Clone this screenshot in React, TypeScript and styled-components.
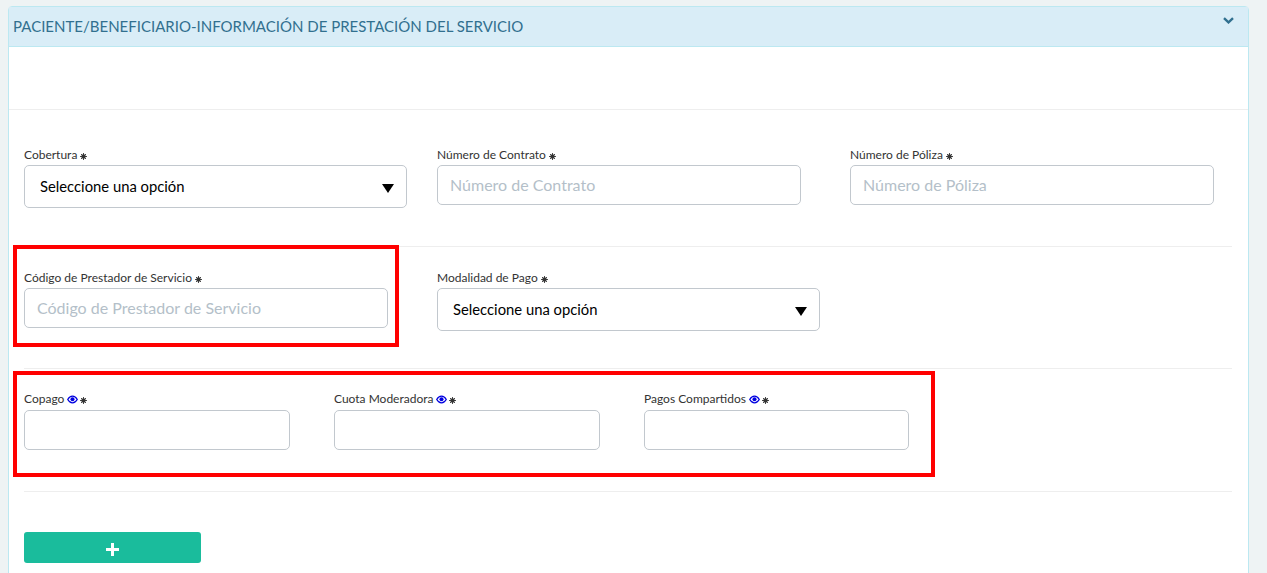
import React from 'react';
import styled, { createGlobalStyle } from 'styled-components';

const GlobalStyle = createGlobalStyle`
    html, body {
        margin: 0;
        height: 573px;
        overflow: hidden;
        background: #eef3f4;
        font-family: Lato, "Open Sans", sans-serif;
    }
    * { box-sizing: border-box; }
`;

const Page = styled.div`
    position: relative;
    height: 573px;
    overflow: hidden;
    padding: 6px 18px 0 8px;
`;

const Panel = styled.section`
    height: 600px;
    background: #fff;
    border: 1px solid #bce8f1;
    border-radius: 4px;
`;

const PanelHeader = styled.header`
    display: flex;
    justify-content: space-between;
    height: 40px;
    padding: 10px 14px 0 4px;
    background: #d9edf7;
    border-bottom: 1px solid #bce8f1;
    color: #31708f;
    font-size: 15px;
    line-height: 19px;
`;

const ChevronSvg = styled.svg`
    width: 11px;
    height: 7px;
`;

const Spacer = styled.div`
    height: 63px;
    border-bottom: 1px solid #eeeeee;
`;

const PanelBody = styled.div`
    padding: 0 16px 0 15px;
`;

const Row = styled.div<{ $height: number; $paddingTop: number; $pitch: number }>`
    display: grid;
    grid-template-columns: repeat(3, ${props => props.$pitch}px);
    align-content: start;
    height: ${props => props.$height}px;
    padding-top: ${props => props.$paddingTop}px;
    border-bottom: 1px solid #eeeeee;
`;

const Field = styled.div<{ $width: number }>`
    width: ${props => props.$width}px;
`;

const Label = styled.label<{ $gap?: number }>`
    display: flex;
    align-items: center;
    height: 15px;
    margin-bottom: ${props => props.$gap ?? 3}px;
    color: #333333;
    font-size: 12px;
    line-height: 15px;
    white-space: nowrap;
`;

const RequiredSvg = styled.svg`
    width: 7px;
    height: 7px;
    margin: 3px 0 0 3px;
    color: #333333;
`;

const EyeSvg = styled.svg`
    width: 11px;
    height: 9px;
    margin: 1px -1px 0 3px;
    color: #0000e0;
`;

const TextInput = styled.input`
    display: block;
    width: 100%;
    height: 40px;
    padding: 0 12px 2px;
    background: #fff;
    border: 1px solid #c2c8ce;
    border-radius: 5px;
    font-family: inherit;
    font-size: 16px;
    outline: none;

    &::placeholder {
        color: #b4bfc9;
        opacity: 1;
    }
`;

const Select = styled.div`
    display: flex;
    align-items: center;
    justify-content: space-between;
    height: 43px;
    padding: 0 12px 2px 15px;
    background: #fff;
    border: 1px solid #c2c8ce;
    border-radius: 5px;
    color: #000;
    font-size: 14.8px;
`;

const Caret = styled.span`
    width: 0;
    height: 0;
    margin-top: 5px;
    border-left: 6px solid transparent;
    border-right: 6px solid transparent;
    border-top: 9px solid #000;
`;

const AddButton = styled.button`
    display: flex;
    align-items: center;
    justify-content: center;
    width: 177px;
    height: 31px;
    margin-top: 40px;
    padding: 3px 1px 0 0;
    background: #1abc9c;
    border: none;
    border-radius: 3px;
`;

const PlusSvg = styled.svg`
    width: 13px;
    height: 13px;
`;

const Annotation = styled.div<{ $left: number; $top: number; $width: number; $height: number }>`
    position: absolute;
    left: ${props => props.$left}px;
    top: ${props => props.$top}px;
    width: ${props => props.$width}px;
    height: ${props => props.$height}px;
    border: 4px solid #ff0000;
    pointer-events: none;
`;

const Chevron = () => (
    <ChevronSvg viewBox="0 0 11 7">
        <path d="M1 1.2 5.500 5.400 10 1.200" fill="none" stroke="currentColor" strokeWidth="2.4" />
    </ChevronSvg>
);

const Required = () => (
    <RequiredSvg viewBox="0 0 7 7">
        <circle cx="3.5" cy="3.5" r="2.2" fill="currentColor" />
        <path
            d="M3.5 0v7M0 3.5h7M1 1l5 5M6 1 1 6"
            stroke="currentColor"
            strokeWidth="0.9"
        />
    </RequiredSvg>
);

const Eye = () => (
    <EyeSvg viewBox="0 0 12 9">
        <path
            d="M.8 4.500C2.200 2 4 .9 6 .9s3.800 1.100 5.200 3.600C9.800 7 8 8.100 6 8.100S2.200 7 .8 4.500Z"
            fill="none"
            stroke="currentColor"
            strokeWidth="1.4"
        />
        <circle cx="6" cy="4.3" r="2.2" fill="currentColor" />
    </EyeSvg>
);

const Plus = () => (
    <PlusSvg viewBox="0 0 13 13">
        <path d="M5 0h3v5h5v3H8v5H5V8H0V5h5Z" fill="#fff" />
    </PlusSvg>
);

const SelectField: React.FC<{ label: string }> = ({ label }) => (
    <Field $width={383}>
        <Label>{label}<Required /></Label>
        <Select>
            Seleccione una opción
            <Caret />
        </Select>
    </Field>
);

const InputField: React.FC<{ label: string }> = ({ label }) => (
    <Field $width={364}>
        <Label>{label}<Required /></Label>
        <TextInput placeholder={label} readOnly />
    </Field>
);

const AmountField: React.FC<{ label: string; width?: number }> = ({ label, width = 266 }) => (
    <Field $width={width}>
        <Label $gap={4}>{label}<Eye /><Required /></Label>
        <TextInput readOnly />
    </Field>
);

export default function App() {
    return (
        <Page>
            <GlobalStyle />
            <Panel>
                <PanelHeader>
                    PACIENTE/BENEFICIARIO-INFORMACIÓN DE PRESTACIÓN DEL SERVICIO
                    <Chevron />
                </PanelHeader>
                <Spacer />
                <PanelBody>
                    <Row $height={137} $paddingTop={37} $pitch={413}>
                        <SelectField label="Cobertura" />
                        <InputField label="Número de Contrato" />
                        <InputField label="Número de Póliza" />
                    </Row>
                    <Row $height={122} $paddingTop={23} $pitch={413}>
                        <InputField label="Código de Prestador de Servicio" />
                        <SelectField label="Modalidad de Pago" />
                    </Row>
                    <Row $height={123} $paddingTop={22} $pitch={310}>
                        <AmountField label="Copago" />
                        <AmountField label="Cuota Moderadora" />
                        <AmountField label="Pagos Compartidos" width={265} />
                    </Row>
                    <AddButton><Plus /></AddButton>
                </PanelBody>
            </Panel>
            <Annotation $left={13} $top={245} $width={386} $height={102} />
            <Annotation $left={13} $top={371} $width={922} $height={106} />
        </Page>
    );
}
